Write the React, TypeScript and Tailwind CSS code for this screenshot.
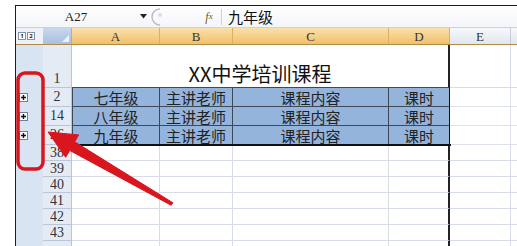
import React from "react";

const serif = { fontFamily: '"Liberation Serif", "DejaVu Serif", serif' };
const cjk = { fontFamily: '"Noto Sans CJK SC", "Noto Sans", sans-serif' };

const W = {
  out: "w-[27px]",
  hdr: "w-[29px]",
  A: "w-[88px]",
  B: "w-[73px]",
  C: "w-[156px]",
  D: "w-[61px]",
  E: "w-[61px]",
};

function OutlinePlus() {
  return (
    <div className="w-[9px] h-[9px] bg-white border border-[#6f7f96] flex items-center justify-center ml-[3px]">
      <svg width="5" height="5" viewBox="0 0 5 5">
        <path d="M0 2.5 H5 M2.5 0 V5" stroke="#111" strokeWidth="1.4" />
      </svg>
    </div>
  );
}

function RowHeader({ label, top }: { label: string; top?: boolean }) {
  return (
    <div
      className={`${W.hdr} h-full shrink-0 bg-[#e4ebf5] border-r border-b border-[#b8c6d8] flex justify-center ${top ? "items-end pb-[1px]" : "items-center"} text-[14px] leading-none text-[#333]`}
      style={serif}
    >
      {label}
    </div>
  );
}

function BlueRow({ label, grade }: { label: string; grade: string }) {
  const cell = "h-full shrink-0 bg-[#95b4dc] border-r border-b border-[#3d4858] flex items-center justify-center text-[15px] leading-none text-[#222]";
  return (
    <div className="flex h-[19px] shrink-0">
      <div className={`${W.out} h-full shrink-0 bg-[#d9e4f3] flex items-center`}>
        <OutlinePlus />
      </div>
      <RowHeader label={label} />
      <div className={`${W.A} ${cell} border-l`} style={cjk}>{grade}</div>
      <div className={`${W.B} ${cell}`} style={cjk}>主讲老师</div>
      <div className={`${W.C} ${cell}`} style={cjk}>课程内容</div>
      <div className={`${W.D} ${cell} border-r-[#111]`} style={cjk}>课时</div>
      <div className={`${W.E} h-full shrink-0 border-r border-b border-[#dde2ea]`} />
      <div className="flex-1 h-full border-b border-[#dde2ea]" />
    </div>
  );
}

function EmptyRow({ label }: { label: string }) {
  const g = "h-full shrink-0 border-r border-b border-[#d7dde6]";
  return (
    <div className="flex h-[16px] shrink-0">
      <div className={`${W.out} h-full shrink-0 bg-[#d9e4f3]`} />
      <RowHeader label={label} />
      <div className={`${W.A} ${g}`} />
      <div className={`${W.B} ${g}`} />
      <div className={`${W.C} ${g}`} />
      <div className={`${W.D} h-full shrink-0 border-b border-[#d7dde6] border-r-2 border-r-[#222]`} />
      <div className={`${W.E} ${g}`} />
      <div className="flex-1 h-full border-b border-[#d7dde6]" />
    </div>
  );
}

export default function App() {
  const colHead = "h-full shrink-0 flex items-center justify-center text-[13px] leading-none text-[#333] border-r";
  return (
    <div className="relative w-[517px] h-[246px] overflow-hidden bg-white pl-[15px] pt-[5px]">
      <div className="h-full border-l border-t border-[#1c1c1c] flex flex-col">
        {/* formula bar */}
        <div className="flex items-center h-[22px] shrink-0 bg-gradient-to-b from-[#ffffff] to-[#f3f5f9] border-b border-[#c9d2de]">
          <div className="w-[120px] h-full flex items-center justify-center text-[13px] text-[#222]" style={serif}>A27</div>
          <div className="w-[14px] flex items-center justify-center">
            <svg width="7" height="5" viewBox="0 0 7 5"><path d="M0 0 L7 0 L3.5 4.5 Z" fill="#222" /></svg>
          </div>
          <div className="w-[16px] h-full flex items-center">
            <svg width="16" height="20" viewBox="0 0 16 20">
              <path d="M10 2 A8 8 0 0 0 10 18" fill="none" stroke="#b4bcc8" strokeWidth="1.4" />
              <circle cx="10" cy="8" r="2" fill="#d8dde5" />
            </svg>
          </div>
          <div className="w-[34px]" />
          <div className="w-[18px] flex items-center justify-center text-[12px] italic text-[#6b5a2a]" style={serif}>f<span className="text-[9px]">x</span></div>
          <div className="w-[1px] h-[16px] bg-[#c9d0da] mx-[3px]" />
          <div className="pl-[3px] text-[15px] leading-none text-[#111]" style={cjk}>九年级</div>
        </div>
        {/* column header row */}
        <div className="flex h-[17px] shrink-0 border-b border-[#b08a48]">
          <div className={`${W.out} h-full shrink-0 bg-[#eef2f8] flex items-center gap-[1px] pl-[2px]`}>
            <div className="w-[8px] h-[8px] bg-white border border-[#8593a8] flex items-center justify-center text-[6px] leading-none font-bold text-[#222]">1</div>
            <div className="w-[8px] h-[8px] bg-white border border-[#8593a8] flex items-center justify-center text-[6px] leading-none font-bold text-[#222]">2</div>
          </div>
          <div className={`${W.hdr} relative h-full shrink-0 bg-gradient-to-b from-[#c8d7ec] to-[#a9c0e0] border-r border-[#9cb0cc]`}>
            <svg className="absolute right-[2px] bottom-[2px]" width="7" height="7" viewBox="0 0 7 7"><path d="M7 0 L7 7 L0 7 Z" fill="#eef3fa" /></svg>
          </div>
          <div className={`${W.A} ${colHead} bg-gradient-to-b from-[#fae0ab] to-[#f2c069] border-[#dfae62]`} style={serif}>A</div>
          <div className={`${W.B} ${colHead} bg-gradient-to-b from-[#fae0ab] to-[#f2c069] border-[#dfae62]`} style={serif}>B</div>
          <div className={`${W.C} ${colHead} bg-gradient-to-b from-[#fae0ab] to-[#f2c069] border-[#dfae62]`} style={serif}>C</div>
          <div className={`${W.D} ${colHead} bg-gradient-to-b from-[#fae0ab] to-[#f2c069] border-[#dfae62]`} style={serif}>D</div>
          <div className={`${W.E} ${colHead} bg-gradient-to-b from-[#f6f8fb] to-[#e1e7ef] border-[#c5cfdc]`} style={serif}>E</div>
          <div className="flex-1 h-full bg-gradient-to-b from-[#f6f8fb] to-[#e1e7ef]" />
        </div>
        {/* row 1 title */}
        <div className="flex h-[43px] shrink-0">
          <div className={`${W.out} h-full shrink-0 bg-[#d9e4f3]`} />
          <RowHeader label="1" top />
          <div className="w-[378px] h-full shrink-0 border-r-2 border-r-[#222] border-b border-b-[#3d4858] flex items-end justify-center pb-[3px] text-[20px] leading-none text-[#111]" style={cjk}>
            XX中学培训课程
          </div>
          <div className={`${W.E} h-full shrink-0 border-r border-b border-[#d7dde6]`} />
          <div className="flex-1 h-full border-b border-[#d7dde6]" />
        </div>
        <BlueRow label="2" grade="七年级" />
        <BlueRow label="14" grade="八年级" />
        <div className="relative shrink-0">
          <BlueRow label="26" grade="九年级" />
          <div className="absolute left-[56px] bottom-[-1px] w-[379px] h-[2px] bg-[#111]" />
        </div>
        <EmptyRow label="38" />
        <EmptyRow label="39" />
        <EmptyRow label="40" />
        <EmptyRow label="41" />
        <EmptyRow label="42" />
        <EmptyRow label="43" />
        <EmptyRow label="" />
      </div>
      {/* red annotation overlay */}
      <svg className="absolute left-0 top-0 pointer-events-none" width="517" height="246" viewBox="0 0 517 246">
        <rect x="18" y="73" width="25" height="96" rx="7" ry="7" fill="none" stroke="#d9161d" strokeWidth="3.5" />
        <polygon
          points="48,132 78.7,134.9 74.7,141.8 172.8,202.7 171.2,205.3 69.7,150.4 65.7,157.3"
          fill="#d9161d"
          stroke="#d9161d"
          strokeWidth="1"
          strokeLinejoin="round"
        />
      </svg>
    </div>
  );
}
